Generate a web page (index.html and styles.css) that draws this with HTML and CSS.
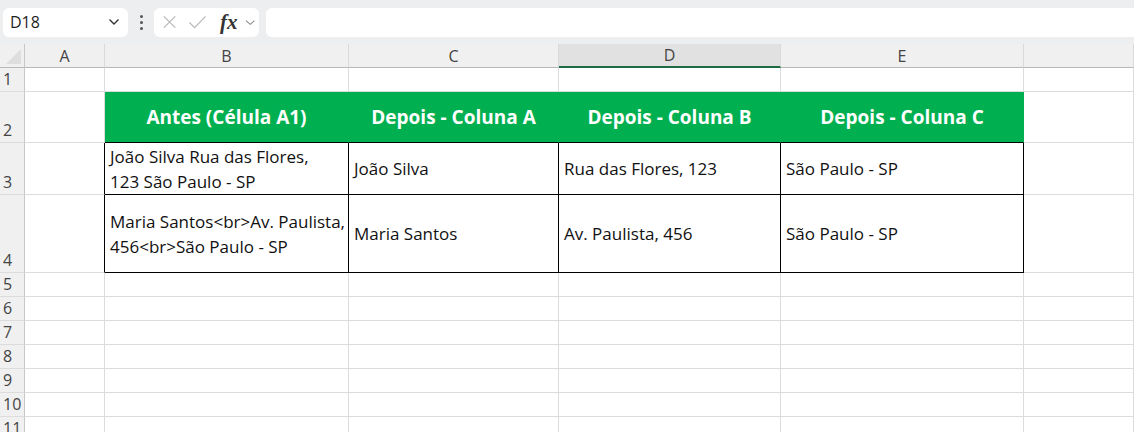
FILE: index.html
```html
<!DOCTYPE html>
<html lang="pt-BR">
<head>
  <meta charset="UTF-8">
  <title>Planilha</title>
  <link rel="stylesheet" href="styles.css">
</head>
<body>
  <div class="toolbar">
    <div class="name-box">
      <span>D18</span>
      <svg class="chev" width="12" height="8" viewBox="0 0 12 8"><path d="M1.5 1.5 L6 6 L10.5 1.5" fill="none" stroke="#333" stroke-width="1.4"/></svg>
    </div>
    <div class="dots"><i></i><i></i><i></i></div>
    <div class="fx-box">
      <svg width="16" height="16" viewBox="0 0 16 16"><path d="M2 2 L14 14 M14 2 L2 14" stroke="#b8b8b8" stroke-width="1.3"/></svg>
      <svg width="20" height="16" viewBox="0 0 20 16"><path d="M1.5 8.5 L7 14 L18.5 2" fill="none" stroke="#b8b8b8" stroke-width="1.3"/></svg>
      <span class="fx">fx</span>
      <svg width="11" height="7" viewBox="0 0 11 7"><path d="M1 1.5 L5.5 5.5 L10 1.5" fill="none" stroke="#888" stroke-width="1.1"/></svg>
    </div>
    <div class="formula"></div>
  </div>

  <div class="sheet">
    <div class="corner"></div>
    <div class="col-head">A</div>
    <div class="col-head">B</div>
    <div class="col-head">C</div>
    <div class="col-head active">D</div>
    <div class="col-head">E</div>
    <div class="col-head"></div>

    <div class="row-head">1</div>
    <div class="cell"></div><div class="cell"></div><div class="cell"></div><div class="cell"></div><div class="cell"></div><div class="cell"></div>

    <div class="row-head">2</div>
    <div class="cell"></div>
    <div class="cell hdr">Antes (Célula A1)</div>
    <div class="cell hdr">Depois - Coluna A</div>
    <div class="cell hdr">Depois - Coluna B</div>
    <div class="cell hdr">Depois - Coluna C</div>
    <div class="cell"></div>

    <div class="row-head">3</div>
    <div class="cell edge"></div>
    <div class="cell data"><span>João Silva Rua das Flores,<br>123 São Paulo - SP</span></div>
    <div class="cell data">João Silva</div>
    <div class="cell data">Rua das Flores, 123</div>
    <div class="cell data">São Paulo - SP</div>
    <div class="cell"></div>

    <div class="row-head">4</div>
    <div class="cell edge"></div>
    <div class="cell data"><span>Maria Santos&lt;br&gt;Av. Paulista,<br>456&lt;br&gt;São Paulo - SP</span></div>
    <div class="cell data">Maria Santos</div>
    <div class="cell data">Av. Paulista, 456</div>
    <div class="cell data">São Paulo - SP</div>
    <div class="cell"></div>

    <div class="row-head">5</div>
    <div class="cell"></div><div class="cell"></div><div class="cell"></div><div class="cell"></div><div class="cell"></div><div class="cell"></div>
    <div class="row-head">6</div>
    <div class="cell"></div><div class="cell"></div><div class="cell"></div><div class="cell"></div><div class="cell"></div><div class="cell"></div>
    <div class="row-head">7</div>
    <div class="cell"></div><div class="cell"></div><div class="cell"></div><div class="cell"></div><div class="cell"></div><div class="cell"></div>
    <div class="row-head">8</div>
    <div class="cell"></div><div class="cell"></div><div class="cell"></div><div class="cell"></div><div class="cell"></div><div class="cell"></div>
    <div class="row-head">9</div>
    <div class="cell"></div><div class="cell"></div><div class="cell"></div><div class="cell"></div><div class="cell"></div><div class="cell"></div>
    <div class="row-head">10</div>
    <div class="cell"></div><div class="cell"></div><div class="cell"></div><div class="cell"></div><div class="cell"></div><div class="cell"></div>
    <div class="row-head">11</div>
    <div class="cell"></div><div class="cell"></div><div class="cell"></div><div class="cell"></div><div class="cell"></div><div class="cell"></div>
  </div>
</body>
</html>
```

FILE: styles.css
```css
body {
  margin: 0;
  width: 1134px;
  height: 432px;
  overflow: hidden;
  background-color: #fff;
  font-family: "Open Sans", "Noto Sans", sans-serif;
}

/* barra de fórmulas */
.toolbar {
  display: flex;
  align-items: center;
  height: 44px;
  padding: 0 0 0 3px;
  background-color: #eceef0;
  box-sizing: border-box;
}

.name-box {
  display: flex;
  align-items: center;
  justify-content: space-between;
  width: 125px;
  height: 29px;
  padding: 0 8px 0 7px;
  background-color: #fff;
  border-radius: 6px;
  box-sizing: border-box;
  font-size: 16px;
  color: #1f1f1f;
}

.dots {
  display: flex;
  flex-direction: column;
  gap: 3px;
  margin: 0 11px 0 12px;
}

.dots i {
  width: 3px;
  height: 3px;
  border-radius: 50%;
  background-color: #555;
}

.fx-box {
  display: flex;
  align-items: center;
  gap: 11px;
  width: 105px;
  height: 29px;
  padding: 0 4px 0 8px;
  background-color: #fff;
  border-radius: 6px;
  box-sizing: border-box;
}

.fx {
  font-family: "Liberation Serif", serif;
  font-style: italic;
  font-weight: bold;
  font-size: 21px;
  line-height: 1;
  color: #333;
  margin: 0 -4px 0 2px;
}

.formula {
  flex: 1;
  height: 29px;
  margin-left: 7px;
  background-color: #fff;
  border-radius: 6px 0 0 6px;
}

/* grade */
.sheet {
  display: grid;
  grid-template-columns: 25px 80px 244px 210px 222px 243px 1fr;
  grid-template-rows: 24px 24px 51px 52px 78px repeat(7, 24px);
}

.corner {
  position: relative;
  background-color: #f0f0f0;
  border-right: 1px solid #c8c8c8;
  border-bottom: 1px solid #b8b8b8;
}

.corner::after {
  content: "";
  position: absolute;
  right: 3px;
  bottom: 3px;
  border-left: 15px solid transparent;
  border-bottom: 15px solid #dedede;
}

.col-head {
  display: flex;
  align-items: center;
  justify-content: center;
  background-color: #f0f0f0;
  border-right: 1px solid #dadada;
  border-bottom: 1px solid #b8b8b8;
  font-size: 16px;
  color: #444;
}

.col-head.active {
  background-color: #e1e1e1;
  border-bottom: 2px solid #1d6b41;
}

.row-head {
  display: flex;
  align-items: flex-end;
  padding: 0 0 1px 3px;
  background-color: #f0f0f0;
  border-right: 1px solid #c8c8c8;
  border-bottom: 1px solid #dcdcdc;
  font-size: 16px;
  color: #444;
  line-height: 21px;
}

.cell {
  border-right: 1px solid #dcdcdc;
  border-bottom: 1px solid #dcdcdc;
  font-size: 17px;
  color: #111;
}

.cell.edge {
  border-right-color: #000;
}

.cell.hdr {
  display: flex;
  align-items: center;
  justify-content: center;
  background-color: #00b050;
  border-right-color: #00b050;
  border-bottom-color: #000;
  color: #fff;
  font-weight: bold;
  font-size: 19px;
}

.cell.data {
  display: flex;
  align-items: center;
  padding: 0 4px 0 5px;
  border-right-color: #000;
  border-bottom-color: #000;
  line-height: 25px;
  white-space: nowrap;
}
```
